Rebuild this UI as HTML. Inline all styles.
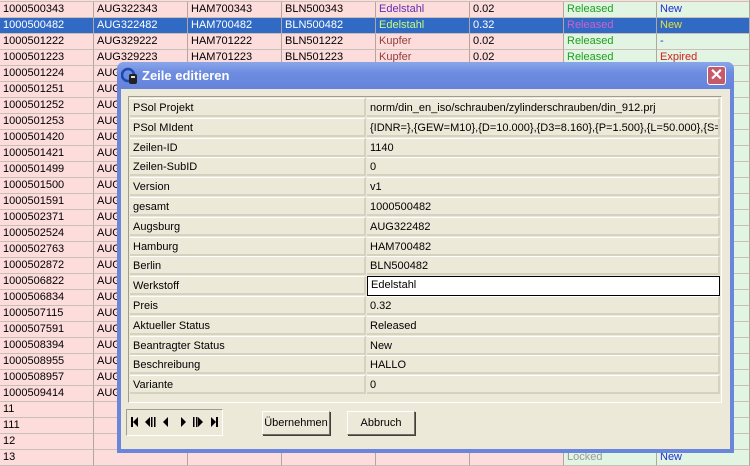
<!DOCTYPE html>
<html><head><style>
*{margin:0;padding:0;box-sizing:border-box}
body{width:750px;height:464px;overflow:hidden;background:#fff;font-family:"Liberation Sans",Arial,sans-serif;font-size:11px;position:relative}
.c{position:absolute;height:16px;line-height:15px;padding-left:3px;border-right:1px solid #b0a8a0;border-bottom:1px solid #c8c0b8;white-space:nowrap;overflow:hidden}
.p{background:#fddcdc}.g{background:#e2f4e2}
.sel{background:#316ac5;color:#fff}
#dlg{position:absolute;left:117px;top:62px;width:617px;height:391px;border-radius:7px 7px 0 0;background:linear-gradient(#6e8fe0,#5b7ad6 26px,#6a86dc 27px);}
#tb{position:absolute;left:0;top:0;right:0;height:27px;color:#fff;font-weight:bold;font-size:13px;line-height:28px;padding-left:25px;background:linear-gradient(#8aa6ea,#6d8ce0 40%,#6583db);border-radius:7px 7px 0 0}
#body{position:absolute;left:4px;top:27px;right:4px;bottom:4px;background:#ece9d8}
.fr{position:absolute;left:128px;top:96px;width:594px;height:307px;border:1px solid #a09c90;border-right-color:#fff;border-bottom-color:#fff}
.l,.v{position:absolute;height:19px;line-height:19px;padding-left:3px;color:#000;white-space:nowrap;overflow:hidden;border-bottom:2px solid #d6d2c2;border-right:2px solid #d6d2c2;border-top:1px solid #fff}
.l{left:130px;width:236px}.v{left:367px;width:353px}
.btn{position:absolute;height:24px;border:1px solid #fff;border-right-color:#716f64;border-bottom-color:#716f64;background:#ece9d8;text-align:center;line-height:22px;box-shadow:1px 1px 0 #404040}
</style></head><body>
<div id="grid"></div>
<div id="dlg"><div id="tb">Zeile editieren</div><div id="body"></div>
<svg style="position:absolute;left:4px;top:5px" width="18" height="18"><circle cx="7" cy="8" r="6" fill="none" stroke="#1a4ab0" stroke-width="2.5"/><rect x="8" y="7" width="8" height="10" rx="2" fill="#222"/><rect x="10" y="9" width="4" height="2" fill="#ddd"/></svg>
<div style="position:absolute;right:8px;top:4px;width:19px;height:19px;border:1px solid #fff;border-radius:3px;background:#c45a6a;color:#fff;font-size:16px;font-weight:bold;line-height:17px;text-align:center">✕</div>
</div>
<div class="fr"></div>
<div id="rows"></div>
<div style="position:absolute;left:126px;top:409px;width:97px;height:27px;border:1px solid #a09c90;border-right-color:#fff;border-bottom-color:#fff"></div>
<svg style="position:absolute;left:126px;top:409px" width="97" height="27" fill="#000">
<rect x="5" y="8" width="2" height="10"/><path d="M7 13 L12 8 V18 Z"/>
<path d="M19 13 L24 8 V18 Z"/><rect x="25" y="8" width="1.5" height="10"/><rect x="28" y="8" width="1.5" height="10"/>
<path d="M37 13 L42 8 V18 Z"/>
<path d="M60 13 L55 8 V18 Z"/>
<rect x="67" y="8" width="1.5" height="10"/><rect x="70" y="8" width="1.5" height="10"/><path d="M77 13 L72 8 V18 Z"/>
<path d="M90 13 L85 8 V18 Z"/><rect x="90" y="8" width="2" height="10"/>
</svg>
<div class="btn" style="left:262px;top:411px;width:68px">Übernehmen</div>
<div class="btn" style="left:347px;top:411px;width:68px">Abbruch</div>
<script>
var ids=["1000500343","1000500482","1000501222","1000501223","1000501224","1000501251","1000501252","1000501253","1000501420","1000501421","1000501499","1000501500","1000501591","1000502371","1000502524","1000502763","1000502872","1000506822","1000506834","1000507115","1000507591","1000508394","1000508955","1000508957","1000509414","11","111","12","13"];
var cx=[0,94,188,282,376,470,564,657,750];
var h="";
for(var i=0;i<29;i++){var y=2+i*16;var id=ids[i];
var d=[id,"","","","","","",""];
if(i==0){d=[id,"AUG322343","HAM700343","BLN500343","Edelstahl","0.02","Released","New"]}
if(i==1){d=[id,"AUG322482","HAM700482","BLN500482","Edelstahl","0.32","Released","New"]}
if(i==2){d=[id,"AUG329222","HAM701222","BLN501222","Kupfer","0.02","Released","-"]}
if(i==3){d=[id,"AUG329223","HAM701223","BLN501223","Kupfer","0.02","Released","Expired"]}
if(i>3&&i<25){d[1]="AUG"}
if(i==28){d[6]="Locked";d[7]="New"}
var col=["#000","#000","#000","#000",i<2?"#6030b0":"#904040","#000","#20a020",i==3?"#d02020":"#2030d0"];
if(i==28){col[6]="#999";col[7]="#2030d0"}
for(var j=0;j<8;j++){var cls=i==1?"sel":(j<6?"p":"g");var st=i==1?(j==4?"#c0ff80":j==6?"#d060d0":j==7?"#e0e040":"#fff"):col[j];
h+='<div class="c '+cls+'" style="left:'+cx[j]+'px;top:'+y+'px;width:'+(cx[j+1]-cx[j])+'px;color:'+st+'">'+d[j]+'</div>'}}
h+='<div class="c p" style="left:0;top:-14px;width:750px"></div>';
document.getElementById("grid").innerHTML=h;
var L=[["PSol Projekt","norm/din_en_iso/schrauben/zylinderschrauben/din_912.prj"],["PSol MIdent","{IDNR=},{GEW=M10},{D=10.000},{D3=8.160},{P=1.500},{L=50.000},{S=8.000}"],["Zeilen-ID","1140"],["Zeilen-SubID","0"],["Version","v1"],["gesamt","1000500482"],["Augsburg","AUG322482"],["Hamburg","HAM700482"],["Berlin","BLN500482"],["Werkstoff","Edelstahl"],["Preis","0.32"],["Aktueller Status","Released"],["Beantragter Status","New"],["Beschreibung","HALLO"],["Variante","0"]];
var r="";for(var k=0;k<15;k++){var t=Math.round(98+k*19.8);
r+='<div class="l" style="top:'+t+'px">'+L[k][0]+'</div>';
if(k==9)r+='<div class="v" style="top:'+t+'px;background:#fff;border:1px solid #000;height:20px;line-height:17px">'+L[k][1]+'</div>';
else r+='<div class="v" style="top:'+t+'px">'+L[k][1]+'</div>';}
document.getElementById("rows").innerHTML=r;
</script>
</body></html>
